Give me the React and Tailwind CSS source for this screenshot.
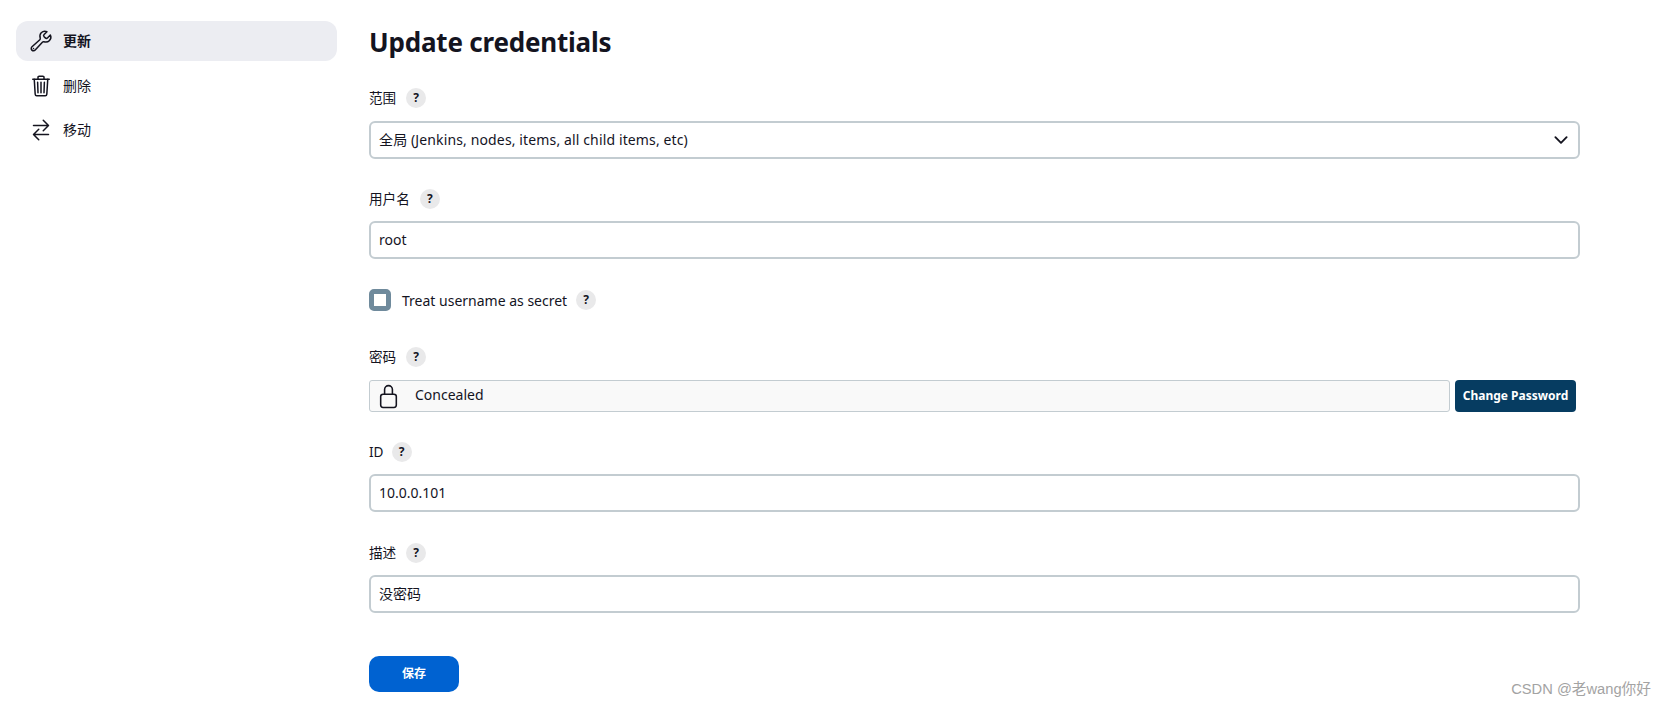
import React from 'react';
import { IoBuildOutline, IoTrashOutline, IoSwapHorizontalOutline, IoLockClosedOutline, IoChevronDown } from 'react-icons/io5';

const font = 'font-["Noto_Sans","Noto_Sans_CJK_SC",sans-serif]';

const HelpBadge = ({ className = 'ml-[10px]' }) => (
  <span className={`flex h-[20px] w-[20px] items-center justify-center rounded-full bg-[#e9e9ea] text-[12px] font-bold text-[#14141f] ${className}`}>
    ?
  </span>
);

const Label = ({ children, badgeClass }) => (
  <div className="flex h-[20px] items-center text-[13.6px] text-[#14141f]">
    {children}
    <HelpBadge className={badgeClass} />
  </div>
);

const TextField = ({ value }) => (
  <div className="mt-[12px] flex h-[38px] items-center rounded-[6px] border-2 border-[#c3ccd1] bg-white px-[8px] pb-[1px] text-[14px] text-[#14141f]">
    {value}
  </div>
);

const SideItem = ({ icon: Icon, label, active, className = '' }) => (
  <div className={`flex h-[40px] items-center rounded-[12px] pl-[13px] text-[14px] text-[#14141f] ${active ? 'bg-[#ecedf2] font-semibold' : ''} ${className}`}>
    <Icon className="h-[24px] w-[24px]" />
    <span className="mb-[2px] ml-[10px]">{label}</span>
  </div>
);

export default function App() {
  return (
    <div className={`relative flex h-[708px] w-[1667px] overflow-hidden bg-white ${font}`}>
      <aside className="ml-[16px] mt-[21px] flex w-[321px] flex-col gap-[4px]">
        <SideItem icon={IoBuildOutline} label="更新" active />
        <SideItem icon={IoTrashOutline} label="删除" className="mt-[1px]" />
        <SideItem icon={IoSwapHorizontalOutline} label="移动" />
      </aside>

      <main className="ml-[32px] w-[1211px] pt-[22px]">
        <h1 className="h-[40px] text-[26px] font-bold leading-[40px] tracking-[-0.2px] text-[#14141f]">Update credentials</h1>

        <div className="mt-[26px]">
          <Label>范围</Label>
          <div className="mt-[13px] flex h-[38px] items-center justify-between rounded-[6px] border-2 border-[#c3ccd1] bg-white pb-[1px] pl-[8px] pr-[7px] text-[14px] tracking-[0.13px] text-[#14141f]">
            全局 (Jenkins, nodes, items, all child items, etc)
            <IoChevronDown className="h-[20px] w-[20px]" />
          </div>
        </div>

        <div className="mt-[30px]">
          <Label>用户名</Label>
          <TextField value="root" />
        </div>

        <div className="mt-[30px] flex h-[22px] items-center text-[14px] text-[#14141f]">
          <span className="h-[22px] w-[22px] rounded-[5px] border-[5px] border-[#6f8a9c] bg-white" />
          <span className="ml-[11px]">Treat username as secret</span>
          <HelpBadge className="ml-[9px]" />
        </div>

        <div className="mt-[36px]">
          <Label>密码</Label>
          <div className="mt-[13px] flex h-[32px] items-center gap-[5px]">
            <div className="flex h-[32px] w-[1081px] items-center rounded-[3px] border border-[#c3ccd1] bg-[#f9f9f9] pl-[6px] text-[14px] text-[#14141f]">
              <IoLockClosedOutline className="h-[25px] w-[25px]" />
              <span className="mb-[3px] ml-[14px]">Concealed</span>
            </div>
            <button className="flex h-[32px] w-[121px] items-center justify-center rounded-[4px] bg-[#063c61] text-[12px] font-bold text-white">
              Change Password
            </button>
          </div>
        </div>

        <div className="mt-[30px]">
          <Label badgeClass="ml-[8px]">ID</Label>
          <TextField value="10.0.0.101" />
        </div>

        <div className="mt-[31px]">
          <Label>描述</Label>
          <TextField value="没密码" />
        </div>

        <button className="mt-[43px] flex h-[36px] w-[90px] items-center justify-center rounded-[10px] bg-[#0062d1] text-[12px] font-bold text-white">
          保存
        </button>
      </main>

      <div className="absolute bottom-[8px] right-[16px] font-['Liberation_Sans','Noto_Sans_CJK_SC',sans-serif] text-[14.7px] text-[#a3a3a3]">
        CSDN @老wang你好
      </div>
    </div>
  );
}
